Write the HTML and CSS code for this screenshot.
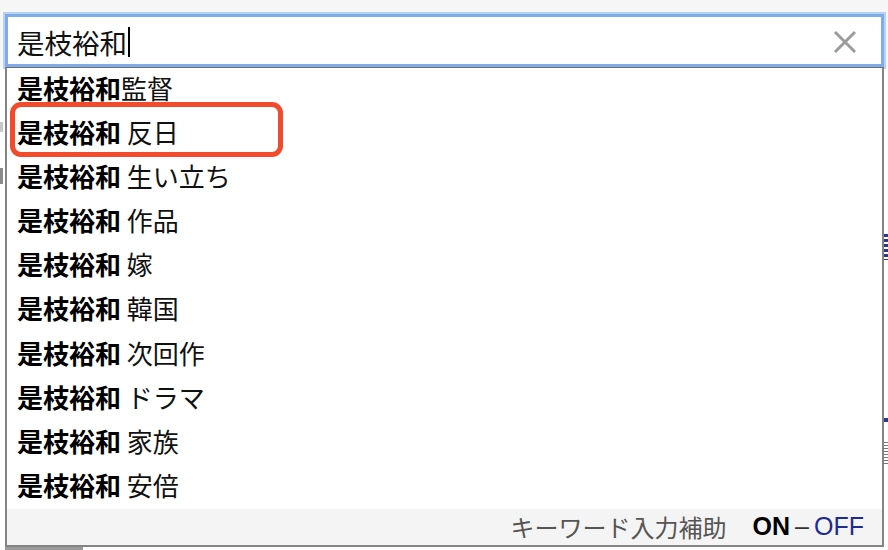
FILE: index.html
```html
<!DOCTYPE html>
<html lang="ja">
<head>
<meta charset="utf-8">
<title>検索</title>
<link rel="stylesheet" href="styles.css">
</head>
<body>
<div class="page">
  <div class="behind">
    <span class="bit bit-a"></span>
    <span class="bit bit-b"></span>
    <span class="bit bit-c"></span>
    <span class="bit bit-d"></span>
    <span class="bit bit-e"></span>
  </div>
  <div class="search">
    <div class="field">
      <span class="query">是枝裕和</span><span class="caret"></span>
      <span class="clear" aria-label="クリア">
        <svg width="24" height="24" viewBox="0 0 24 24"><path d="M2 2 L22 22 M22 2 L2 22" stroke="#9b9b9b" stroke-width="3" fill="none"/></svg>
      </span>
    </div>
    <div class="suggest">
      <ul class="list">
        <li><b>是枝裕和</b>監督</li>
        <li class="marked"><b>是枝裕和</b> 反日</li>
        <li><b>是枝裕和</b> 生い立ち</li>
        <li><b>是枝裕和</b> 作品</li>
        <li><b>是枝裕和</b> 嫁</li>
        <li><b>是枝裕和</b> 韓国</li>
        <li><b>是枝裕和</b> 次回作</li>
        <li><b>是枝裕和</b> ドラマ</li>
        <li><b>是枝裕和</b> 家族</li>
        <li><b>是枝裕和</b> 安倍</li>
      </ul>
      <div class="foot">
        <span class="foot-label">キーワード入力補助</span>
        <span class="toggle"><b class="on">ON</b><span class="dash">–</span><span class="off">OFF</span></span>
      </div>
    </div>
    <div class="under"></div>
  </div>
</div>
</body>
</html>
```
FILE: styles.css
```css
html, body {
  margin: 0;
  padding: 0;
}
body {
  width: 888px;
  height: 550px;
  overflow: hidden;
  background: #ffffff;
  font-family: "Noto Sans CJK JP", "Noto Sans", sans-serif;
  color: #111;
}
.page {
  position: relative;
  width: 888px;
  height: 550px;
  background: linear-gradient(#f6f6f6 0, #f6f6f6 67px, #ffffff 67px);
}
.behind {
  position: absolute;
  inset: 0;
}
.bit {
  position: absolute;
  display: block;
}
.bit-a { left: 884px; top: 234px; width: 4px; height: 26px; background: repeating-linear-gradient(#233a97 0 3px, transparent 3px 5px); }
.bit-b { left: 884px; top: 418px; width: 4px; height: 4px; background: #233a97; }
.bit-c { left: 884px; top: 442px; width: 4px; height: 22px; background: repeating-linear-gradient(#777 0 1px, transparent 1px 3px); }
.bit-d { left: 0; top: 122px; width: 3px; height: 10px; background: #c8c8c8; }
.bit-e { left: 0; top: 168px; width: 3px; height: 16px; background: #8a8a8a; }

.search {
  position: relative;
  padding: 14px 0 0 5px;
  width: 879px;
}
.field {
  box-sizing: border-box;
  width: 879px;
  height: 53px;
  background: #fff;
  border: 3px solid #80ade9;
  box-shadow: 0 0 0 2px #b7d2f4;
  display: flex;
  align-items: center;
  padding: 3px 0 0 9px;
}
.query {
  font-size: 27.5px;
  line-height: 32px;
  color: #111;
}
.caret {
  width: 2px;
  height: 30px;
  background: #000;
  margin-left: 1px;
}
.clear {
  margin-left: auto;
  margin-right: 24px;
  width: 24px;
  height: 24px;
  display: flex;
}
.suggest {
  position: relative;
  box-sizing: border-box;
  width: 879px;
  background: #fff;
  border: 2px solid #848484;
  border-top: 1px solid #6e6e6e;
}
.list {
  list-style: none;
  margin: 0;
  padding: 0;
}
.list li {
  position: relative;
  height: 44.1px;
  line-height: 40px;
  padding-left: 10px;
  font-size: 26px;
  color: #111;
  white-space: pre;
}
.list b {
  font-weight: 700;
  color: #000;
}
.list li.marked::after {
  content: "";
  position: absolute;
  left: 3px;
  top: -10px;
  width: 273px;
  height: 55px;
  box-sizing: border-box;
  border: 5px solid #f24a2b;
  border-radius: 11px;
}
.foot {
  height: 36px;
  background: #f4f4f4;
  display: flex;
  align-items: center;
  justify-content: flex-end;
  padding-right: 18px;
}
.foot-label {
  font-size: 24px;
  color: #555;
  margin-right: 26px;
}
.toggle {
  font-family: "Liberation Sans", Arial, sans-serif;
  font-size: 25px;
  display: flex;
  align-items: center;
}
.on {
  color: #000;
  font-weight: 700;
}
.dash {
  color: #333;
  margin: 0 5px;
}
.off {
  color: #1f2b8f;
}
.under {
  width: 78px;
  height: 3px;
  background: #9a9a9a;
}
```
